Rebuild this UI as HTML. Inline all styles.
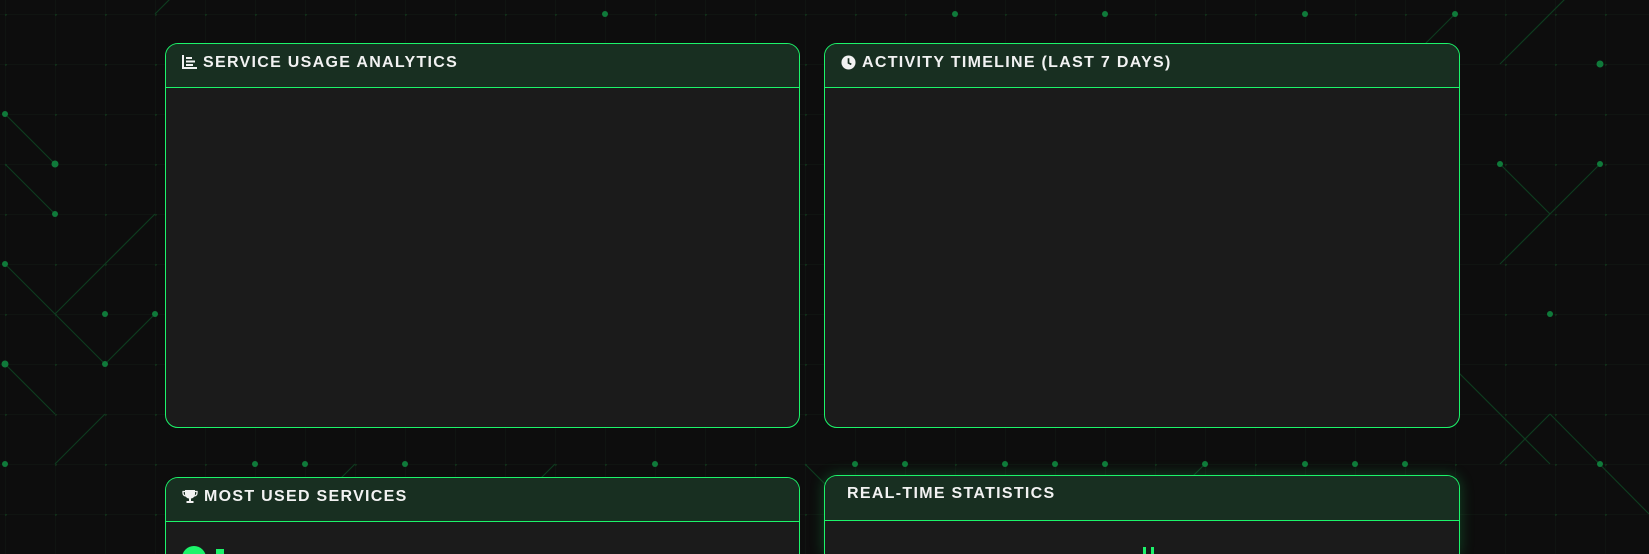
<!DOCTYPE html>
<html><head><meta charset="utf-8"><style>
html,body{margin:0;padding:0;width:1649px;height:554px;overflow:hidden;background:#0d0d0d;font-family:"Liberation Sans",sans-serif;position:relative}
#bg{position:absolute;left:0;top:0}
.card{position:absolute;background:#1b1b1b;border:1px solid #1cf46a;border-radius:13px;overflow:hidden;box-sizing:border-box}
.hd{height:44px;background:#182f21;border-bottom:1px solid #1cf46a;box-sizing:border-box;color:#f2f2f2;font-weight:bold;font-size:16px;letter-spacing:1.3px;padding:10px 0 0 16px;white-space:nowrap;display:flex;align-items:flex-start;line-height:17px}
.hd svg{margin-right:6px;margin-top:1px}
</style></head><body>
<svg id="bg" width="1649" height="554">
<defs><pattern id="g" x="5" y="14" width="50" height="50" patternUnits="userSpaceOnUse">
<path d="M0 0V50M0 0H50" stroke="#121c15" stroke-width="1" fill="none"/>
<circle cx="0" cy="0" r="2" fill="#113019"/></pattern></defs>
<rect width="1649" height="554" fill="url(#g)"/>
<g stroke="#0e3b1f" stroke-width="1.2" fill="none">
<path d="M5 114L55 164M5 164L55 214M55 314L155 214M5 264L105 364M105 364L155 314M5 364L55 414M105 414L55 464M155 14L205 -36M1500 64L1600 -36M1500 164L1550 214M1600 164L1500 264M1450 364L1550 464M1550 414L1649 514M1500 464L1550 414M355 464L305 514M555 464L505 514M1455 14L1405 64M805 464L855 514M1205 464L1155 514"/>
</g>
<g fill="#0f7a3a">
<circle cx="5" cy="114" r="3"/><circle cx="55" cy="164" r="3.5"/><circle cx="105" cy="314" r="3"/><circle cx="5" cy="364" r="3.5"/><circle cx="55" cy="214" r="3"/><circle cx="105" cy="364" r="3"/><circle cx="5" cy="264" r="3"/><circle cx="155" cy="314" r="3"/>
<circle cx="605" cy="14" r="3"/><circle cx="955" cy="14" r="3"/><circle cx="1105" cy="14" r="3"/><circle cx="1305" cy="14" r="3"/><circle cx="1455" cy="14" r="3"/><circle cx="1600" cy="64" r="3.5"/><circle cx="1500" cy="164" r="3"/><circle cx="1600" cy="164" r="3"/><circle cx="1550" cy="314" r="3"/><circle cx="1600" cy="464" r="3"/>
<circle cx="255" cy="464" r="3"/><circle cx="305" cy="464" r="3"/><circle cx="405" cy="464" r="3"/><circle cx="655" cy="464" r="3"/><circle cx="1005" cy="464" r="3"/><circle cx="1055" cy="464" r="3"/><circle cx="1105" cy="464" r="3"/><circle cx="1205" cy="464" r="3"/><circle cx="1305" cy="464" r="3"/><circle cx="1355" cy="464" r="3"/><circle cx="1405" cy="464" r="3"/><circle cx="5" cy="464" r="3"/><circle cx="855" cy="464" r="3"/><circle cx="905" cy="464" r="3"/>
</g>
</svg>

<div class="card" style="left:165px;top:43px;width:635px;height:385px">
<div class="hd"><svg width="15" height="14" viewBox="0 0 15 14"><path d="M1 0V13H15" stroke="#f2f2f2" stroke-width="2" fill="none"/><path d="M4 3h6M4 6.5h9M4 10h7" stroke="#f2f2f2" stroke-width="2"/></svg>SERVICE USAGE ANALYTICS</div>
</div>
<div class="card" style="left:824px;top:43px;width:636px;height:385px">
<div class="hd"><svg width="15" height="15" viewBox="0 0 16 16"><circle cx="8" cy="8" r="7.5" fill="#f2f2f2"/><path d="M8 3.5V8.5L11 10" stroke="#182f21" stroke-width="1.8" fill="none"/></svg>ACTIVITY TIMELINE (LAST 7 DAYS)</div>
</div>
<div class="card" style="left:165px;top:477px;width:635px;height:77px;border-bottom:none;border-radius:13px 13px 0 0">
<div class="hd"><svg width="16" height="15" viewBox="0 0 16 15"><path d="M3 1H13V5C13 8 10.5 9.5 9 9.5V12H11.5V14H4.5V12H7V9.5C5.5 9.5 3 8 3 5Z" fill="#f2f2f2"/><path d="M3 2.5H1V4C1 6 2.5 7 4 7M13 2.5H15V4C15 6 13.5 7 12 7" stroke="#f2f2f2" stroke-width="1.3" fill="none"/></svg>MOST USED SERVICES</div>
<div style="position:absolute;left:16px;top:68px;width:24px;height:24px;border-radius:50%;background:#1cf46a"></div>
<div style="position:absolute;left:50px;top:71px;width:8px;height:6px;background:#1cf46a"></div>
</div>
<div class="card" style="left:824px;top:475px;width:636px;height:79px;border-bottom:none;border-radius:13px 13px 0 0;box-shadow:0 0 14px rgba(28,244,106,0.25)">
<div class="hd" style="padding-left:22px;height:45px;padding-top:9px">REAL-TIME STATISTICS</div>
<div style="position:absolute;left:318px;top:71px;width:3px;height:8px;background:#1cf46a"></div>
<div style="position:absolute;left:326px;top:71px;width:3px;height:8px;background:#1cf46a"></div>
</div>
</body></html>
